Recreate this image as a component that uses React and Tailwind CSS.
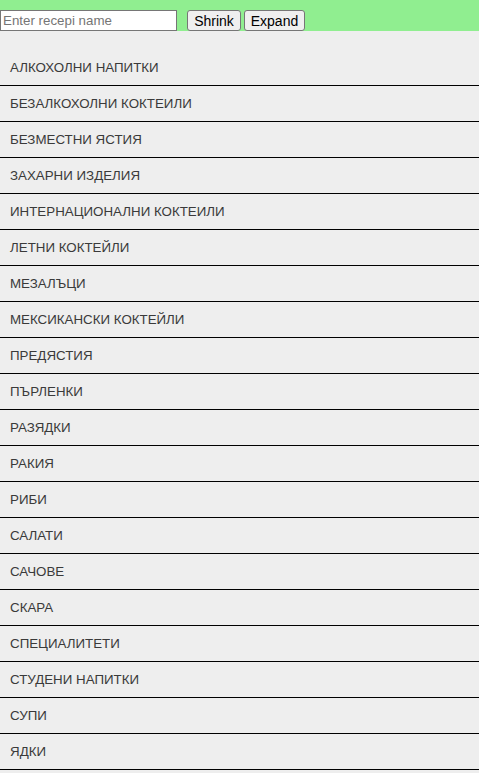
import { useState } from 'react';

const categories = [
  'АЛКОХОЛНИ НАПИТКИ',
  'БЕЗАЛКОХОЛНИ КОКТЕИЛИ',
  'БЕЗМЕСТНИ ЯСТИЯ',
  'ЗАХАРНИ ИЗДЕЛИЯ',
  'ИНТЕРНАЦИОНАЛНИ КОКТЕИЛИ',
  'ЛЕТНИ КОКТЕЙЛИ',
  'МЕЗАЛЪЦИ',
  'МЕКСИКАНСКИ КОКТЕЙЛИ',
  'ПРЕДЯСТИЯ',
  'ПЪРЛЕНКИ',
  'РАЗЯДКИ',
  'РАКИЯ',
  'РИБИ',
  'САЛАТИ',
  'САЧОВЕ',
  'СКАРА',
  'СПЕЦИАЛИТЕТИ',
  'СТУДЕНИ НАПИТКИ',
  'СУПИ',
  'ЯДКИ',
];

function App() {
  const [query, setQuery] = useState('');

  return (
    <div className="min-h-[773px] bg-[#eeeeee] font-['Liberation_Sans',Arial,sans-serif]">
      {/* Search bar */}
      <div className="flex h-[31px] items-start bg-[#90ee90] pt-[10px]">
        <input
          type="text"
          placeholder="Enter recepi name"
          value={query}
          onChange={(e) => setQuery(e.target.value)}
          className="h-[21px] w-[177px] border border-[#767676] bg-white px-[2px] text-[13.33px] text-black outline-none placeholder:text-[#757575]"
        />
        <button className="ml-[10px] h-[21px] w-[54px] rounded-[3px] border border-[#767676] bg-[#efefef] text-[14px] text-black">
          Shrink
        </button>
        <button className="ml-[3px] h-[21px] w-[61px] rounded-[3px] border border-[#767676] bg-[#efefef] text-[14px] text-black">
          Expand
        </button>
      </div>

      {/* Categories */}
      <ul className="mt-[19px]">
        {categories.map((name) => (
          <li
            key={name}
            className="flex h-[36px] items-center border-b border-black pl-[10px] text-[13.33px] text-[#3a3a3a]"
          >
            {name}
          </li>
        ))}
      </ul>
    </div>
  );
}

export default App;
